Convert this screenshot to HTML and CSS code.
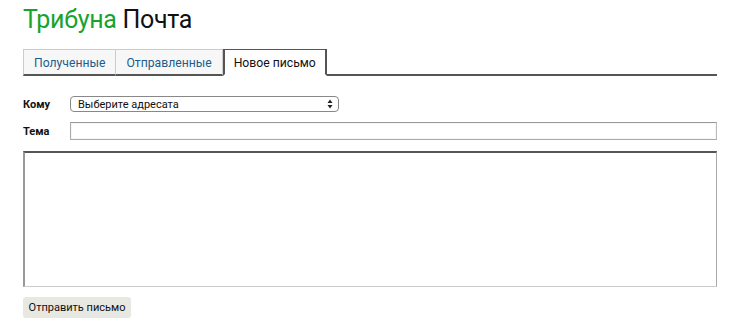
FILE: index.html
```html
<!DOCTYPE html>
<html lang="ru">

<head>
    <meta charset="UTF-8">
    <title>Трибуна Почта</title>
    <link rel="stylesheet" href="styles.css">
</head>

<body>
    <h1 class="logo"><span class="logo-brand">Трибуна</span> Почта</h1>

    <ul class="tabs">
        <li class="tab"><a href="#">Полученные</a></li>
        <li class="tab"><a href="#">Отправленные</a></li>
        <li class="tab tab-active"><a href="#">Новое письмо</a></li>
    </ul>

    <form class="compose">
        <div class="row">
            <label class="row-label" for="to">Кому</label>
            <div class="select">
                <span>Выберите адресата</span>
                <svg class="select-arrows" viewBox="0 0 6 10" width="6" height="10">
                    <path d="M3 0.5 L5.5 4 H0.5 Z M3 9.5 L5.5 6 H0.5 Z" fill="#222"></path>
                </svg>
            </div>
        </div>
        <div class="row">
            <label class="row-label" for="subject">Тема</label>
            <input class="subject" type="text" id="subject">
        </div>
        <textarea class="body"></textarea>
        <div>
            <button class="send" type="submit">Отправить письмо</button>
        </div>
    </form>
</body>

</html>
```

FILE: styles.css
```css
*,
*::before,
*::after {
    box-sizing: border-box;
}

body {
    margin: 0;
    padding: 6px 13px 0 23px;
    font-family: Roboto, "Liberation Sans", Arial, sans-serif;
    color: #111;
    background: #fff;
}

.logo {
    margin: 0;
    font-size: 25px;
    font-weight: normal;
    line-height: 28px;
    letter-spacing: -0.3px;
}

.logo-brand {
    color: #17a32e;
}

.tabs {
    list-style: none;
    margin: 15px 0 0;
    padding: 0;
    display: flex;
    border-bottom: 2px solid #555;
}

.tab {
    margin-bottom: -2px;
    border: 1px solid #ccc;
    border-bottom: 2px solid #555;
    border-left-width: 0;
    background: #f7f7f7;
}

.tab:first-child {
    border-left-width: 1px;
}

.tab a {
    display: block;
    height: 23px;
    padding: 4px 10px 0;
    font-size: 12.2px;
    line-height: 18px;
    color: #1d5c8c;
    text-decoration: none;
}

.tab-active {
    background: #fff;
    border: 2px solid #555;
    border-bottom-color: #fff;
    border-top-width: 1px;
}

.tab-active a {
    color: #111;
    padding: 4px 9px 0;
    height: 24px;
}

.compose {
    display: flex;
    flex-direction: column;
    margin-top: 20px;
}

.row {
    display: flex;
    align-items: center;
    height: 16px;
    margin-bottom: 10px;
}

.row + .row {
    height: 18px;
    margin-bottom: 11px;
}

.row-label {
    width: 47px;
    font-size: 11px;
    font-weight: bold;
}

.select {
    width: 269px;
    height: 16px;
    border: 1px solid #888;
    border-radius: 4px;
    display: flex;
    align-items: center;
    justify-content: space-between;
    padding: 0 5px 0 7px;
    font-size: 11px;
    background: #fff;
}

.subject {
    flex: 1;
    height: 18px;
    margin: 0;
    border: 1px solid #aaa;
    border-top-color: #999;
    border-right-color: #bbb;
    box-shadow: inset 0 0 0 1px #f6f6f6;
}

.body {
    height: 136px;
    margin: 0;
    border-style: solid;
    border-width: 2px 1px 1px 2px;
    border-color: #555 #aaa #ccc #999;
    resize: none;
}

.send {
    margin-top: 10px;
    width: 108px;
    height: 21px;
    padding: 0;
    border: 0;
    border-radius: 3px;
    background: #e8e8e2;
    font-family: inherit;
    font-size: 11px;
    color: #111;
}
```
